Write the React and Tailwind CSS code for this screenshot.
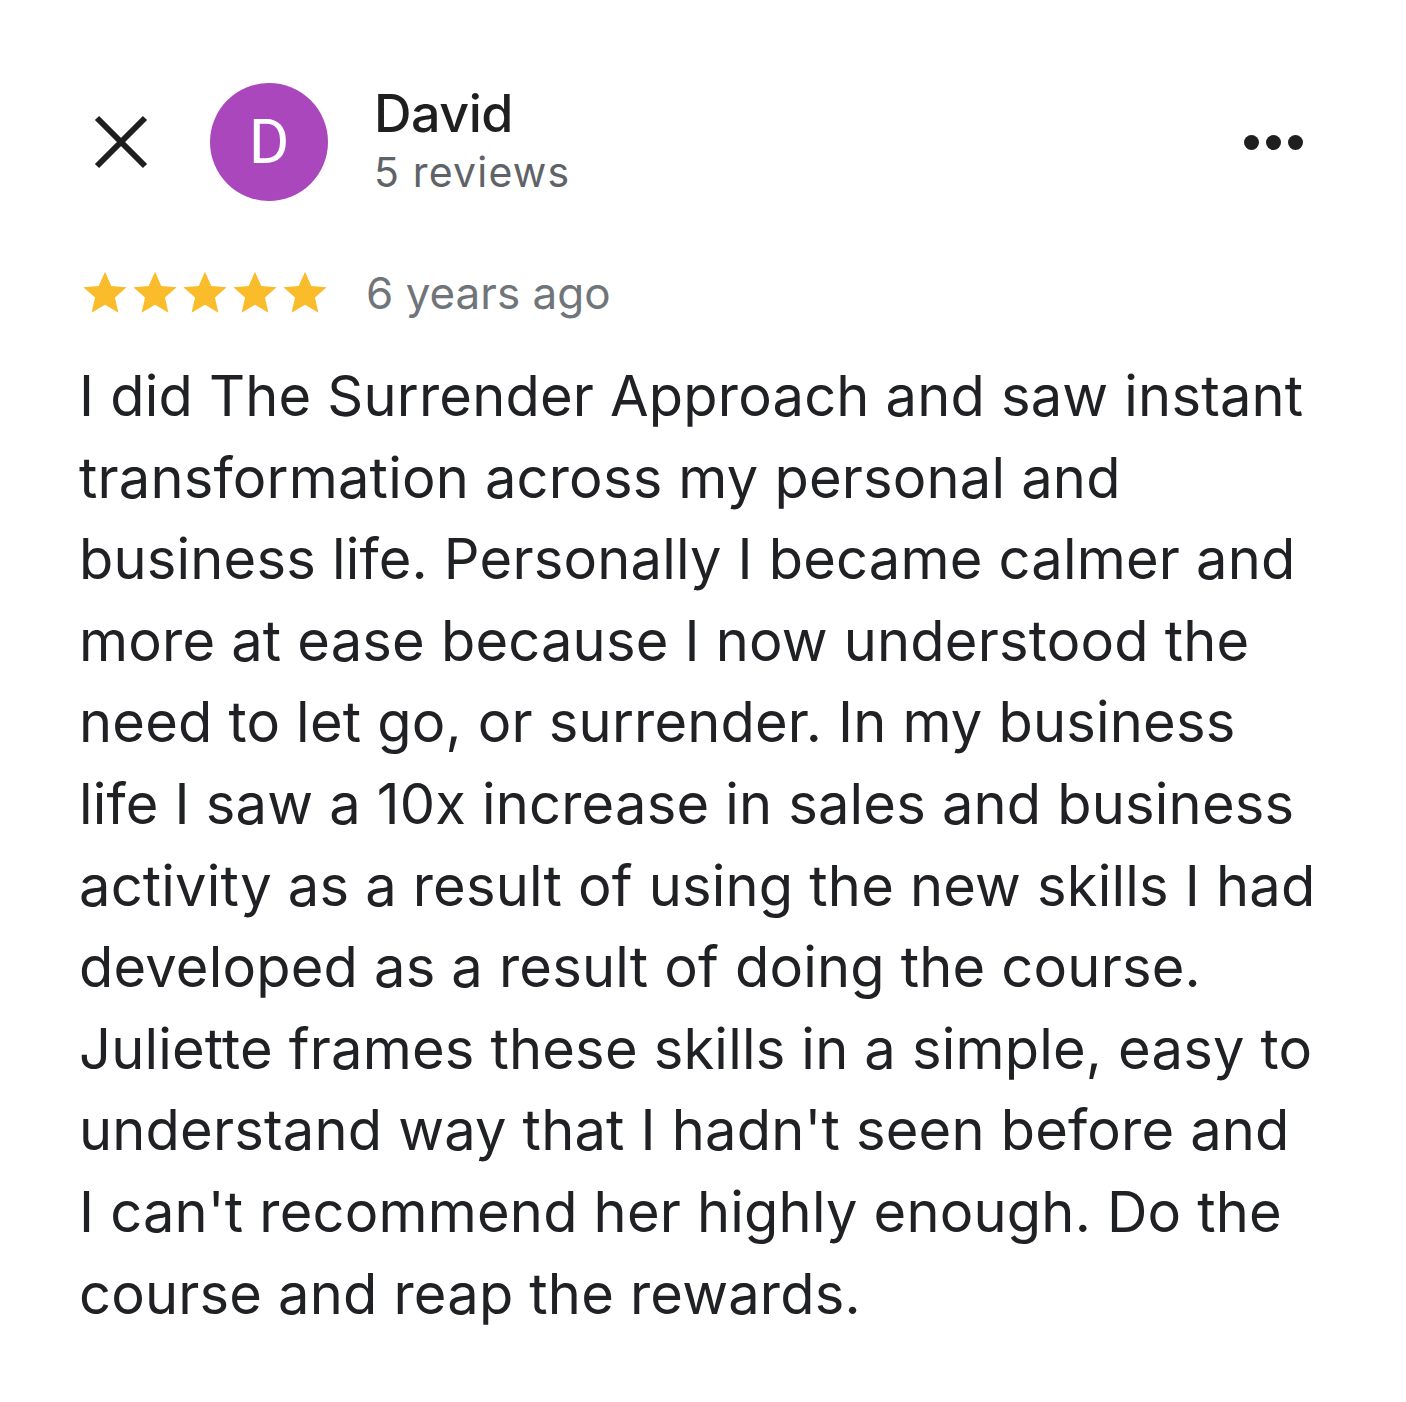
import React from "react";

const lines = [
  "I did The Surrender Approach and saw instant",
  "transformation across my personal and",
  "business life. Personally I became calmer and",
  "more at ease because I now understood the",
  "need to let go, or surrender. In my business",
  "life I saw a 10x increase in sales and business",
  "activity as a result of using the new skills I had",
  "developed as a result of doing the course.",
  "Juliette frames these skills in a simple, easy to",
  "understand way that I hadn't seen before and",
  "I can't recommend her highly enough. Do the",
  "course and reap the rewards.",
];

function Star() {
  return (
    <svg width="54" height="52" viewBox="0 0 24 24" className="-mx-[2px]">
      <path
        fill="#fbbc2c"
        d="M12 2.2l2.9 6.6 7.1.6-5.4 4.7 1.6 7-6.2-3.7-6.2 3.7 1.6-7L2 9.4l7.1-.6z"
      />
    </svg>
  );
}

export default function App() {
  return (
    <div
      className="w-[1406px] h-[1402px] bg-white text-[#202124]"
      style={{ fontFamily: "Inter, Roboto, 'Liberation Sans', sans-serif" }}
    >
      <div className="flex items-center pt-[83px] pl-[92px] pr-[103px]">
        <svg width="58" height="58" viewBox="0 0 58 58" className="shrink-0">
          <path d="M5 5L53 53M53 5L5 53" stroke="#1f1f1f" strokeWidth="6" />
        </svg>
        <div
          className="ml-[60px] w-[118px] h-[118px] rounded-full bg-[#ab47bc] flex items-center justify-center text-white text-[62px] leading-none shrink-0"
          style={{ fontFamily: "Roboto, sans-serif" }}
        >
          D
        </div>
        <div className="ml-[46px] flex flex-col">
          <div className="text-[52px] leading-[58px] mt-[2px] font-medium text-[#1f1f1f] tracking-[-0.5px]">David</div>
          <div className="text-[41px] leading-[58px] text-[#5f6368] tracking-[1.2px]">5 reviews</div>
        </div>
        <div className="ml-auto flex gap-[7px] items-center">
          <span className="w-[15px] h-[15px] rounded-full bg-[#1f1f1f]" />
          <span className="w-[15px] h-[15px] rounded-full bg-[#1f1f1f]" />
          <span className="w-[15px] h-[15px] rounded-full bg-[#1f1f1f]" />
        </div>
      </div>
      <div className="flex items-center pl-[80px] mt-[59px]">
        <div className="flex items-center">
          <Star /><Star /><Star /><Star /><Star />
        </div>
        <span className="ml-[36px] text-[44px] text-[#70757a]">6 years ago</span>
      </div>
      <div className="pl-[79px] mt-[30px] text-[56px] leading-[81.6px] tracking-[0.2px] whitespace-nowrap">
        {lines.map((l, i) => (
          <div key={i}>{l}</div>
        ))}
      </div>
    </div>
  );
}
